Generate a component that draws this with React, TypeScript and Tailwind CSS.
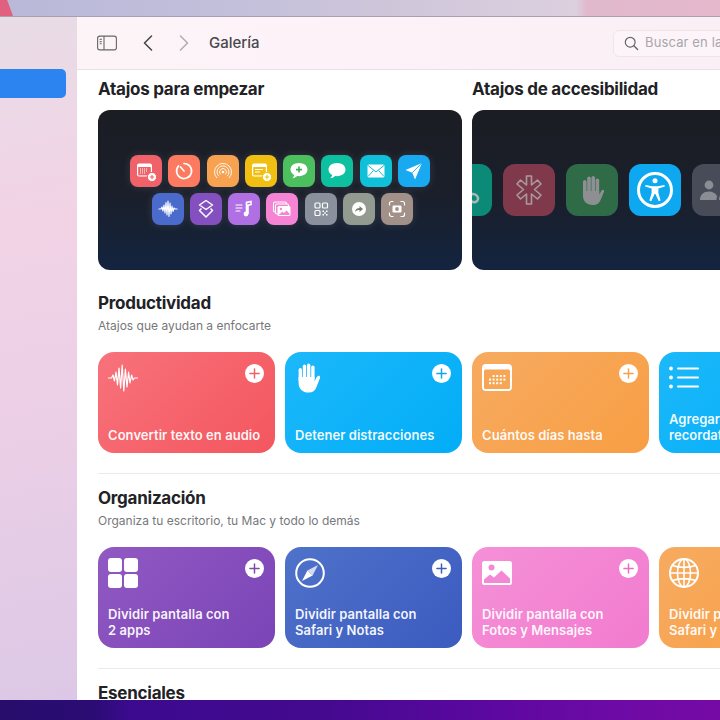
import type { ReactNode } from 'react';

function Glyph({ children, size = 30 }: { children: ReactNode; size?: number }) {
  return (
    <svg width={size} height={size} viewBox="0 0 30 30" fill="none" className="block shrink-0">
      {children}
    </svg>
  );
}

function Wave({ size }: { size?: number }) {
  return (
    <Glyph size={size}>
      <path
        d="M0 15H3.5L5 12L6.5 18L8 9L9.5 22L11 5L12.6 25L14.2 2L15.8 28L17.4 6L19 24L20.6 9L22 20L23.6 12L25 17L26.5 15H30"
        stroke="white"
        strokeWidth="1.2"
        strokeLinejoin="round"
        strokeLinecap="round"
      />
    </Glyph>
  );
}

function Hand({ size, color = 'white' }: { size?: number; color?: string }) {
  return (
    <Glyph size={size}>
      <g fill={color}>
        <rect x="3.6" y="5" width="3.4" height="14" rx="1.7" />
        <rect x="7.8" y="1.5" width="3.4" height="16" rx="1.7" />
        <rect x="12" y="0.5" width="3.4" height="17" rx="1.7" />
        <rect x="16.2" y="2.5" width="3.4" height="15" rx="1.7" />
        <path d="M3.6 14H19.6V18.5L21.6 14.3C22.4 12.9 23.4 12.4 24.3 12.8C25.2 13.2 25.3 14.2 24.9 15.3L21.4 24.3C20.1 27.6 17.8 29.6 13.8 29.6C7.4 29.6 3.6 25.8 3.6 20Z" />
      </g>
    </Glyph>
  );
}

function Calendar({ bg }: { bg: string }) {
  const dots = [];
  for (let r = 0; r < 3; r++) {
    for (let c = 0; c < 5; c++) {
      if ((r === 0 && c < 1) || (r === 2 && c > 3)) continue;
      dots.push(<rect key={`${r}-${c}`} x={7 + c * 3.6} y={12 + r * 3.6} width="2" height="2" fill="white" />);
    }
  }
  return (
    <Glyph>
      <rect y="1" width="30" height="27" rx="4" fill="white" />
      <rect x="2" y="6.5" width="26" height="19.5" rx="1.5" fill={bg} />
      {dots}
    </Glyph>
  );
}

function ListIcon() {
  return (
    <Glyph>
      <g fill="white">
        <circle cx="2" cy="5.5" r="1.9" />
        <circle cx="2" cy="14.5" r="1.9" />
        <circle cx="2" cy="23.5" r="1.9" />
        <rect x="8" y="4.5" width="22" height="2" rx="1" />
        <rect x="8" y="13.5" width="22" height="2" rx="1" />
        <rect x="8" y="22.5" width="22" height="2" rx="1" />
      </g>
    </Glyph>
  );
}

function GridIcon() {
  return (
    <Glyph>
      <g fill="white">
        <rect width="14" height="14" rx="3" />
        <rect x="16" width="14" height="14" rx="3" />
        <rect y="16" width="14" height="14" rx="3" />
        <rect x="16" y="16" width="14" height="14" rx="3" />
      </g>
    </Glyph>
  );
}

function Compass() {
  return (
    <Glyph>
      <circle cx="15" cy="15" r="13.8" stroke="white" strokeWidth="2" />
      <path d="M23 7L17.6 17.6L12.4 12.4Z" fill="#ffffff" opacity=".75" />
      <path d="M7 23L12.4 12.4L17.6 17.6Z" fill="white" />
    </Glyph>
  );
}

function Photo({ bg }: { bg: string }) {
  return (
    <Glyph>
      <rect y="3" width="30" height="24" rx="2.5" fill="white" />
      <circle cx="9.5" cy="9.5" r="3" fill={bg} />
      <path d="M2 25V21.5L8 16.5L12 19.5L19.5 12.5L28 20.5V25Z" fill={bg} />
    </Glyph>
  );
}

function Globe() {
  return (
    <Glyph>
      <g stroke="white" strokeWidth="1.6">
        <circle cx="15" cy="15" r="14" strokeWidth="2" />
        <ellipse cx="15" cy="15" rx="6.5" ry="14" />
        <path d="M15 1V29M1 15H29M3.5 7.5C10 10 20 10 26.5 7.5M3.5 22.5C10 20 20 20 26.5 22.5" />
      </g>
    </Glyph>
  );
}

function Plus({ color }: { color: string }) {
  return (
    <span className="absolute right-[11px] top-[12px] flex h-[19px] w-[19px] items-center justify-center rounded-full bg-white">
      <svg width="11" height="11" viewBox="0 0 12 12">
        <path d="M6 1V11M1 6H11" stroke={color} strokeWidth="1.6" strokeLinecap="round" />
      </svg>
    </span>
  );
}

function Card({
  gradient,
  plus,
  icon,
  lines,
}: {
  gradient: string;
  plus?: string;
  icon: ReactNode;
  lines: string[];
}) {
  return (
    <div className={`relative flex h-[101px] w-[177px] shrink-0 flex-col justify-between rounded-[16px] pb-[10px] pl-[10px] pt-[11px] ${gradient}`}>
      {icon}
      {plus && <Plus color={plus} />}
      <p className="whitespace-nowrap text-[13px] font-semibold leading-[16px] tracking-[0.004em] text-white/95">
        {lines.map((l) => (
          <span key={l} className="block">
            {l}
          </span>
        ))}
      </p>
    </div>
  );
}

function Section({ title, subtitle, children }: { title: string; subtitle: string; children: ReactNode }) {
  return (
    <section>
      <h2 className="text-[17px] font-bold leading-[22px] tracking-[-0.015em] text-[#222226]">{title}</h2>
      <p className="mt-[4px] text-[12px] leading-[16px] text-[#77777b]">{subtitle}</p>
      <div className="mt-[18px] flex gap-[10px]">{children}</div>
    </section>
  );
}

function Mini({ bg, children }: { bg: string; children: ReactNode }) {
  return (
    <div className={`flex h-[32px] w-[32px] shrink-0 items-center justify-center rounded-[8px] shadow-[0_0_8px_rgba(255,255,255,0.12)] ${bg}`}>
      <svg width="22" height="22" viewBox="0 0 22 22" fill="none">
        {children}
      </svg>
    </div>
  );
}

function Big({ bg, children }: { bg: string; children: ReactNode }) {
  return (
    <div className={`flex h-[52px] w-[52px] shrink-0 items-center justify-center rounded-[12px] ${bg}`}>
      <svg width="38" height="38" viewBox="0 0 38 38" fill="none">
        {children}
      </svg>
    </div>
  );
}

function PlusBadge({ bg }: { bg: string }) {
  return (
    <>
      <circle cx="17" cy="17" r="4.6" fill="white" stroke={bg} strokeWidth="1" />
      <path d="M17 14.8V19.2M14.8 17H19.2" stroke={bg} strokeWidth="1.1" />
    </>
  );
}

function StarterIcons() {
  return (
    <div className="flex flex-col items-center gap-[6px]">
      <div className="flex gap-[6.3px]">
        <Mini bg="bg-[#ef626a]">
          <rect x="2" y="3.5" width="15" height="13" rx="2" fill="white" />
          <rect x="3.2" y="7" width="12.6" height="8.4" fill="#ef626a" />
          <path d="M5 9H13M5 11H13M5 13H11" stroke="white" strokeWidth="1" strokeDasharray="1 1" />
          <PlusBadge bg="#ef626a" />
        </Mini>
        <Mini bg="bg-[#fb7a60]">
          <path d="M11 3.5A7.5 7.5 0 1 1 5.5 6" stroke="white" strokeWidth="1.7" strokeLinecap="round" />
          <path d="M11 11L7.5 7" stroke="white" strokeWidth="1.7" strokeLinecap="round" />
        </Mini>
        <Mini bg="bg-[#f6a250]">
          <g stroke="white" strokeWidth="1" opacity=".9">
            <path d="M5 18A8.5 8.5 0 1 1 17 18" />
            <path d="M6.8 16.2A6 6 0 1 1 15.2 16.2" />
            <path d="M8.6 14.4A3.4 3.4 0 1 1 13.4 14.4" />
          </g>
          <circle cx="11" cy="12" r="1.3" fill="white" />
        </Mini>
        <Mini bg="bg-[#f1bf12]">
          <rect x="2" y="3.5" width="15" height="13" rx="2" fill="white" />
          <rect x="3.2" y="7" width="12.6" height="8.4" fill="#f1bf12" />
          <path d="M5 9.5H13M5 12H10" stroke="white" strokeWidth="1.2" />
          <PlusBadge bg="#f1bf12" />
        </Mini>
        <Mini bg="bg-[#4cbf5e]">
          <path d="M11 3C6 3 2.5 5.8 2.5 9.6C2.5 12 4 14 6.2 15.1C6 16.3 5.2 17.5 4.4 18.2C6.2 18.2 8 17.3 9.2 16.1C9.8 16.2 10.4 16.2 11 16.2C16 16.2 19.5 13.4 19.5 9.6C19.5 5.8 16 3 11 3Z" fill="white" />
          <path d="M11 6.6V12.6M8 9.6H14" stroke="#3bb14e" strokeWidth="1.6" />
        </Mini>
        <Mini bg="bg-[#0cc0a0]">
          <path d="M11 3C6 3 2.5 5.8 2.5 9.6C2.5 12 4 14 6.2 15.1C6 16.3 5.2 17.5 4.4 18.2C6.2 18.2 8 17.3 9.2 16.1C9.8 16.2 10.4 16.2 11 16.2C16 16.2 19.5 13.4 19.5 9.6C19.5 5.8 16 3 11 3Z" fill="white" />
        </Mini>
        <Mini bg="bg-[#10bfd8]">
          <rect x="2.5" y="4.5" width="17" height="13" rx="1.5" fill="white" />
          <path d="M3 5.5L11 12L19 5.5M3 16.5L8.5 10.5M19 16.5L13.5 10.5" stroke="#10bfd8" strokeWidth="1" />
        </Mini>
        <Mini bg="bg-[#18a9f1]">
          <path d="M19 3L2.5 10L9.3 12.7L12 19.5Z" fill="white" />
          <path d="M9.3 12.7L19 3" stroke="#18a9f1" strokeWidth=".9" />
        </Mini>
      </div>
      <div className="ml-[5px] flex gap-[6.3px]">
        <Mini bg="bg-[#4a6bcb]">
          <path
            d="M1.5 11H4L5 9L6 13L7 7L8 15L9 4.5L10 17L11 3L12 18.5L13 5L14 16L15 8L16 13.5L17 10L18 11H20.5"
            stroke="white"
            strokeWidth="1.1"
            strokeLinejoin="round"
          />
        </Mini>
        <Mini bg="bg-[#8450bf]">
          <path d="M11 2.5L17.5 7L11 11.5L4.5 7Z" stroke="white" strokeWidth="1.5" strokeLinejoin="round" />
          <path d="M6.5 10.5L4.5 12.5L11 19L17.5 12.5L15.5 10.5" stroke="white" strokeWidth="1.5" strokeLinejoin="round" />
        </Mini>
        <Mini bg="bg-[#b06fe2]">
          <path d="M3 7H9M3 10H9M3 13H7" stroke="white" strokeWidth="1.2" strokeLinecap="round" />
          <path d="M13.5 15.5V4.5L18 3.5V6.5L15 7.2V16" stroke="white" strokeWidth="1.6" />
          <circle cx="13" cy="16" r="2.4" fill="white" />
        </Mini>
        <Mini bg="bg-[#f584d5]">
          <rect x="2.5" y="4" width="13" height="10" rx="1.5" stroke="white" strokeWidth="1.1" />
          <rect x="4.5" y="6" width="13" height="10" rx="1.5" fill="#f584d5" stroke="white" strokeWidth="1.1" />
          <rect x="6.5" y="8" width="13" height="10" rx="1.5" fill="white" />
          <circle cx="10" cy="11" r="1.2" fill="#f584d5" />
          <path d="M7.5 17L11.5 13.5L13 15L15.5 12.5L18.5 15.5V17Z" fill="#f584d5" />
        </Mini>
        <Mini bg="bg-[#8a919c]">
          <g stroke="white" strokeWidth="1.2">
            <rect x="5" y="5" width="5" height="5" rx="1" />
            <rect x="12.5" y="5" width="5" height="5" rx="1" />
            <rect x="5" y="12.5" width="5" height="5" rx="1" />
          </g>
          <path d="M12.5 12.5H14V14H12.5ZM16 12.5H17.5V14H16ZM14.2 14.2H15.8V15.8H14.2ZM12.5 16H14V17.5H12.5ZM16 16H17.5V17.5H16Z" fill="white" />
        </Mini>
        <Mini bg="bg-[#939b91]">
          <circle cx="11" cy="11" r="7" fill="white" />
          <path d="M7 14C7.3 11.3 9 10 11.5 10V8L15 11L11.5 14V12C9.8 12 8.2 12.6 7 14Z" fill="#767e74" />
        </Mini>
        <Mini bg="bg-[#a19189]">
          <path d="M3.5 7V5.5A2 2 0 0 1 5.5 3.5H7M15 3.5H16.5A2 2 0 0 1 18.5 5.5V7M18.5 15V16.5A2 2 0 0 1 16.5 18.5H15M7 18.5H5.5A2 2 0 0 1 3.5 16.5V15" stroke="white" strokeWidth="1.2" strokeLinecap="round" />
          <rect x="6.5" y="7.5" width="9" height="7" rx="1.2" fill="white" />
          <circle cx="11" cy="11" r="1.9" fill="#a19189" />
        </Mini>
      </div>
    </div>
  );
}

function AccessibilityIcons() {
  return (
    <div className="ml-[-32px] flex gap-[11px]">
      <Big bg="bg-[#0b8a78]">
        <path d="M23 24C28 21 33 26 30 30C27 33 21 30 23 24Z" stroke="#a8b8b8" strokeWidth="2.5" />
      </Big>
      <Big bg="bg-[#80394a]">
        <path
          d="M16.5 5H21.5V14L27.5 9L31 13L24.5 18.5L31 24L27.5 28L21.5 23V33H16.5V23L10.5 28L7 24L13.5 18.5L7 13L10.5 9L16.5 14Z"
          stroke="#a79a9f"
          strokeWidth="1.6"
          strokeLinejoin="round"
        />
      </Big>
      <Big bg="bg-[#2f6b46]">
        <g fill="#8d8f92">
          <rect x="10" y="9" width="3.6" height="15" rx="1.8" />
          <rect x="14.2" y="5.5" width="3.6" height="18" rx="1.8" />
          <rect x="18.4" y="5" width="3.6" height="18" rx="1.8" />
          <rect x="22.6" y="7.5" width="3.6" height="16" rx="1.8" />
          <path d="M10 20H26.2V23.5L28.6 19.5C29.6 18 31.8 19 31 20.8L27.6 29C26.4 32 24 34 20 34C13.5 34 10 30 10 25Z" />
        </g>
      </Big>
      <Big bg="bg-[#0ea8f1]">
        <circle cx="19" cy="19" r="16.5" stroke="white" strokeWidth="3" />
        <circle cx="19" cy="9.8" r="2.5" fill="white" />
        <path d="M9.5 14L16.2 15.2H21.8L28.5 14L28.8 15.6L22.4 17.4V22L24.6 29.6L22.8 30.2L19.4 23H18.6L15.2 30.2L13.4 29.6L15.6 22V17.4L9.2 15.6Z" fill="white" />
      </Big>
      <Big bg="bg-[#474c58]">
        <g fill="#8a8d94">
          <circle cx="10" cy="14" r="4.4" />
          <path d="M1 29C1 23.5 4.5 20.5 10 20.5C13.5 20.5 16.5 22 18 25L17.4 29Z" />
          <circle cx="28" cy="14" r="4.4" />
          <path d="M20 29C20 23.5 23 20.5 28 20.5C33 20.5 37 23.5 37 29Z" />
        </g>
      </Big>
    </div>
  );
}

export default function App() {
  return (
    <div className="flex h-[720px] w-[720px] flex-col overflow-hidden font-['Inter','Liberation_Sans',sans-serif]">
      <div className="relative h-[17px] shrink-0 border-b border-[#a8a0b0] bg-[linear-gradient(90deg,#b9b8d8_0%,#c2bfdb_30%,#cfc6da_55%,#dcd0df_80%,#e0b9cd_81.5%,#e6b8cc_100%)]">
        <span className="absolute left-0 top-0 h-[16px] w-[13px] bg-[#e2607f] [clip-path:polygon(0_0,55%_0,100%_100%,0_100%)]" />
      </div>

      <div className="flex min-h-0 flex-1">
        <aside className="w-[77px] shrink-0 bg-[linear-gradient(170deg,#e8dce6_0%,#f2d3e6_30%,#ebcfe6_60%,#dcc8e6_100%)] pt-[52px]">
          <div className="h-[29px] w-[66px] rounded-r-[5px] bg-[#2b84f0]" />
        </aside>

        <main className="flex min-w-0 flex-1 flex-col overflow-hidden bg-white">
          <header className="flex h-[53px] shrink-0 items-center border-b border-[#e6e1e5] bg-[linear-gradient(90deg,#fdf4f8,#fbeff6)] pl-[20px]">
            <svg width="20" height="16" viewBox="0 0 20 16" fill="none">
              <rect x=".6" y="1.1" width="18.8" height="13.8" rx="2.2" stroke="#666" strokeWidth="1.1" />
              <path d="M7 1V15" stroke="#666" strokeWidth="1.1" />
              <path d="M2.6 4.4H4.8M2.6 6.6H4.8M2.6 8.8H4.8" stroke="#777" strokeWidth="1.1" />
            </svg>
            <svg className="ml-[26px]" width="10" height="16" viewBox="0 0 10 16" fill="none">
              <path d="M8.5 1L1.5 8L8.5 15" stroke="#444" strokeWidth="1.5" strokeLinecap="round" strokeLinejoin="round" />
            </svg>
            <svg className="ml-[26px]" width="10" height="16" viewBox="0 0 10 16" fill="none">
              <path d="M1.5 1L8.5 8L1.5 15" stroke="#b0acb0" strokeWidth="1.5" strokeLinecap="round" strokeLinejoin="round" />
            </svg>
            <span className="ml-[20px] text-[15px] font-medium text-[#47474b]">Galería</span>
            <div className="ml-auto mr-[-40px] flex h-[27px] w-[147px] shrink-0 items-center overflow-hidden rounded-l-[6px] border border-[#ece6ea] bg-[#fcf4f8] pl-[10px]">
              <svg width="15" height="15" viewBox="0 0 15 15" fill="none" className="shrink-0">
                <circle cx="6.2" cy="6.2" r="4.9" stroke="#666" strokeWidth="1.2" />
                <path d="M9.8 9.8L13.6 13.6" stroke="#666" strokeWidth="1.4" strokeLinecap="round" />
              </svg>
              <span className="ml-[6px] whitespace-nowrap text-[13px] tracking-[0.01em] text-[#a9a6aa]">Buscar en la galería</span>
            </div>
          </header>

          <div className="pl-[21px] pt-[8px]">
            <div className="flex gap-[10px]">
              <div className="w-[364px] shrink-0">
                <h2 className="text-[17px] font-bold leading-[22px] tracking-[-0.015em] text-[#222226]">Atajos para empezar</h2>
                <div className="mt-[10px] flex h-[160px] items-center justify-center overflow-hidden rounded-[12px] bg-[linear-gradient(180deg,#1b1d23_0%,#1a1f2b_55%,#13243f_100%)]">
                  <StarterIcons />
                </div>
              </div>
              <div className="w-[365px] shrink-0">
                <h2 className="text-[17px] font-bold leading-[22px] tracking-[-0.015em] text-[#222226]">Atajos de accesibilidad</h2>
                <div className="mt-[10px] flex h-[160px] items-center overflow-hidden rounded-[12px] bg-[linear-gradient(180deg,#1b1d23_0%,#1a1f2b_55%,#13243f_100%)]">
                  <AccessibilityIcons />
                </div>
              </div>
            </div>

            <div className="mt-[22px]">
              <Section title="Productividad" subtitle="Atajos que ayudan a enfocarte">
                <Card
                  gradient="bg-[linear-gradient(135deg,#f8727b,#f4565e)]"
                  plus="#f25f68"
                  icon={<Wave />}
                  lines={['Convertir texto en audio']}
                />
                <Card
                  gradient="bg-[linear-gradient(135deg,#1cb8fa,#02adf7)]"
                  plus="#0aa8ef"
                  icon={<Hand />}
                  lines={['Detener distracciones']}
                />
                <Card
                  gradient="bg-[linear-gradient(135deg,#f7ab60,#f89e44)]"
                  plus="#f4a24c"
                  icon={<Calendar bg="#f6a655" />}
                  lines={['Cuántos días hasta']}
                />
                <Card
                  gradient="bg-[linear-gradient(135deg,#1cb8fa,#02adf7)]"
                  icon={<ListIcon />}
                  lines={['Agregar a mis', 'recordatorios']}
                />
              </Section>
            </div>

            <hr className="mt-[20px] border-[#ebebeb]" />

            <div className="mt-[13px]">
              <Section title="Organización" subtitle="Organiza tu escritorio, tu Mac y todo lo demás">
                <Card
                  gradient="bg-[linear-gradient(135deg,#9159c2,#7b44b7)]"
                  plus="#7d4aa8"
                  icon={<GridIcon />}
                  lines={['Dividir pantalla con', '2 apps']}
                />
                <Card
                  gradient="bg-[linear-gradient(135deg,#4f72ca,#3b5bbf)]"
                  plus="#3f5fb5"
                  icon={<Compass />}
                  lines={['Dividir pantalla con', 'Safari y Notas']}
                />
                <Card
                  gradient="bg-[linear-gradient(135deg,#f590d7,#f27bcf)]"
                  plus="#e96cc6"
                  icon={<Photo bg="#f488d4" />}
                  lines={['Dividir pantalla con', 'Fotos y Mensajes']}
                />
                <Card
                  gradient="bg-[linear-gradient(135deg,#f7ab60,#f89e44)]"
                  icon={<Globe />}
                  lines={['Dividir pantalla con', 'Safari y Mapas']}
                />
              </Section>
            </div>

            <hr className="mt-[20px] border-[#ebebeb]" />

            <h2 className="mt-[13px] text-[17px] font-bold leading-[22px] tracking-[-0.015em] text-[#222226]">Esenciales</h2>
          </div>
        </main>
      </div>

      <div className="relative z-10 h-[20px] shrink-0 bg-[linear-gradient(90deg,#280d6c_0%,#2b0c74_13%,#3b0a8e_18%,#44098f_45%,#5c08a0_68%,#6d0aa5_85%,#760aa5_100%)]" />
    </div>
  );
}
